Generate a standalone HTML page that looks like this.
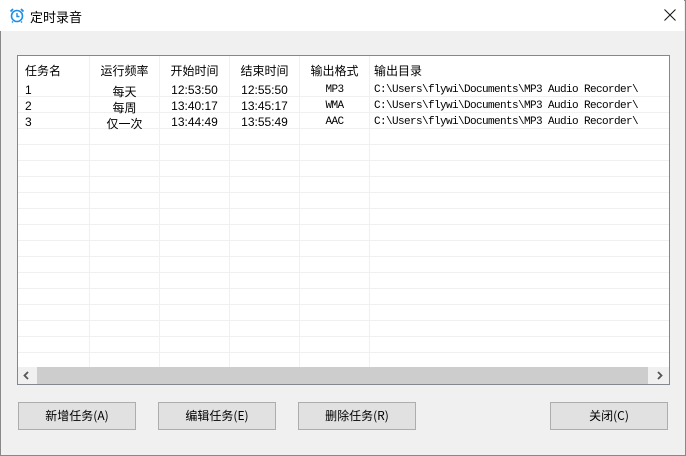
<!DOCTYPE html><html><head><meta charset="utf-8"><style>
*{margin:0;padding:0;box-sizing:border-box}
body{width:686px;height:456px;background:#f0f0f0;position:relative;overflow:hidden;font-family:"Liberation Sans","Noto Sans CJK SC",sans-serif;font-size:12px;color:#000}
.win{position:absolute;left:0;top:0;width:686px;height:456px;border:1px solid #888}
.title{position:absolute;left:0;top:0;width:684px;height:31px;background:#fff}
.title span{position:absolute;left:30px;top:7px;font-size:13px}
.list{position:absolute;left:17px;top:55px;width:653px;height:330px;border:1px solid #828790;background:#fff;overflow:hidden}
.grid{position:absolute;left:0;top:40px;width:651px;height:271px;background:repeating-linear-gradient(to bottom,#f0f0f0 0,#f0f0f0 1px,transparent 1px,transparent 16px)}
.v{position:absolute;top:0;width:1px;height:311px;background:#f0f0f0}
.t{position:absolute;white-space:nowrap}
.h{top:6px;font-size:12px}
.c{text-align:center}
.m{font-family:"Liberation Mono","Noto Sans CJK SC",monospace;font-size:11px;letter-spacing:-0.6px}
.sb{position:absolute;left:0;top:311px;width:651px;height:17px;background:#f0f0f0}
.thumb{position:absolute;left:19px;top:0;width:611px;height:17px;background:#cdcdcd}
.btn{position:absolute;top:402px;width:118px;height:28px;background:#e1e1e1;border:1px solid #adadad;text-align:center;line-height:26px;font-size:12px;font-family:"Noto Sans CJK SC",sans-serif}
</style></head><body><div class="win"></div>
<div class="title">
<svg style="position:absolute;left:9px;top:7px" width="16" height="16" viewBox="0 0 16 16"><circle cx="8" cy="9" r="5.5" fill="none" stroke="#1e8fe6" stroke-width="1.6"/><path d="M1.5 4.5 L4 2 M14.5 4.5 L12 2" stroke="#1e8fe6" stroke-width="1.8"/><path d="M8 6 V9.5 H10.5" stroke="#1e8fe6" stroke-width="1.4" fill="none"/><path d="M4 14.5 L3 15.5 M12 14.5 L13 15.5" stroke="#1e8fe6" stroke-width="1.4"/></svg>
<span>定时录音</span></div>
<svg style="position:absolute;left:664px;top:9px" width="12" height="12"><path d="M0.5 0.5 L11.5 11.5 M11.5 0.5 L0.5 11.5" stroke="#111" stroke-width="1"/></svg>
<div class="list">
<div class="grid"></div>
<div class="v" style="left:71px"></div><div class="v" style="left:141px"></div><div class="v" style="left:211px"></div><div class="v" style="left:281px"></div><div class="v" style="left:351px"></div>
<div class="t h" style="left:7px">任务名</div>
<div class="t h c" style="left:72px;width:69px">运行频率</div>
<div class="t h c" style="left:142px;width:69px">开始时间</div>
<div class="t h c" style="left:212px;width:69px">结束时间</div>
<div class="t h c" style="left:282px;width:69px">输出格式</div>
<div class="t h" style="left:356px">输出目录</div>
<div style="position:absolute;left:0;top:27px;width:651px">
<div class="t" style="left:7px;top:0">1</div><div class="t c" style="left:72px;width:69px;top:0">每天</div><div class="t c" style="left:142px;width:69px;top:0">12:53:50</div><div class="t c" style="left:212px;width:69px;top:0">12:55:50</div><div class="t c m" style="left:282px;width:69px;top:1px">MP3</div><div class="t m" style="left:356px;top:1px">C:\Users\flywi\Documents\MP3 Audio Recorder\</div>
<div class="t" style="left:7px;top:16px">2</div><div class="t c" style="left:72px;width:69px;top:16px">每周</div><div class="t c" style="left:142px;width:69px;top:16px">13:40:17</div><div class="t c" style="left:212px;width:69px;top:16px">13:45:17</div><div class="t c m" style="left:282px;width:69px;top:17px">WMA</div><div class="t m" style="left:356px;top:17px">C:\Users\flywi\Documents\MP3 Audio Recorder\</div>
<div class="t" style="left:7px;top:32px">3</div><div class="t c" style="left:72px;width:69px;top:32px">仅一次</div><div class="t c" style="left:142px;width:69px;top:32px">13:44:49</div><div class="t c" style="left:212px;width:69px;top:32px">13:55:49</div><div class="t c m" style="left:282px;width:69px;top:33px">AAC</div><div class="t m" style="left:356px;top:33px">C:\Users\flywi\Documents\MP3 Audio Recorder\</div>
</div>
<div class="sb"><div class="thumb"></div>
<svg style="position:absolute;left:4px;top:4px" width="8" height="9"><path d="M6 1 L2.5 4.5 L6 8" stroke="#555" stroke-width="1.8" fill="none"/></svg>
<svg style="position:absolute;left:638px;top:4px" width="8" height="9"><path d="M2 1 L5.5 4.5 L2 8" stroke="#555" stroke-width="1.8" fill="none"/></svg>
</div>
</div>
<div class="btn" style="left:18px">新增任务(A)</div>
<div class="btn" style="left:158px">编辑任务(E)</div>
<div class="btn" style="left:298px">删除任务(R)</div>
<div class="btn" style="left:550px">关闭(C)</div>
</body></html>
